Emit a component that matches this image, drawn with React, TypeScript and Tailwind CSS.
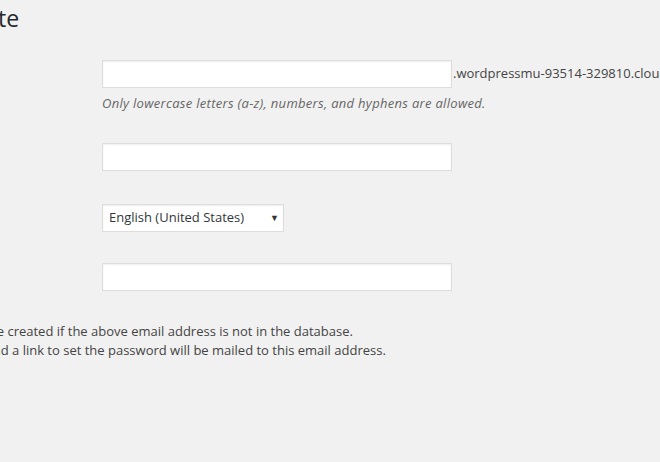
const field =
  "h-[28px] w-[350px] border border-[#dddddd] bg-white shadow-[inset_0_1px_2px_rgba(0,0,0,0.07)]";

export default function App() {
  return (
    <div className="h-[462px] w-[660px] overflow-hidden bg-[#f1f1f1] font-['Open_Sans',sans-serif] text-[13px] text-[#444444]">
      <div className="-ml-[108px] w-[900px]">
        <h1 className="-ml-[15px] pt-[4px] text-[23px] leading-[29px] font-normal text-[#23282d]">
          Add New Site
        </h1>

        <div className="flex flex-col pt-[27px] pl-[210px]">
          <div className="flex items-center">
            <input type="text" className={field} />
            <span className="ml-[1px] whitespace-nowrap">.wordpressmu-93514-329810.cloudwaysapps.com</span>
          </div>
          <p className="mt-[6px] italic tracking-[0.3px] text-[#666666]">
            Only lowercase letters (a-z), numbers, and hyphens are allowed.
          </p>

          <input type="text" className={`${field} mt-[29px]`} />

          <div className="mt-[33px] flex h-[28px] w-[182px] items-center justify-between border border-[#dddddd] bg-white pl-[6px] pr-[4px] shadow-[inset_0_1px_2px_rgba(0,0,0,0.07)]">
            <span className="text-[#32373c]">English (United States)</span>
            <span className="text-[9px] text-[#333333]">▼</span>
          </div>

          <input type="text" className={`${field} mt-[31px]`} />
        </div>

        <div className="pt-[31px] pl-[3px] leading-[19px]">
          <p>A new user will be created if the above email address is not in the database.</p>
          <p>The username and a link to set the password will be mailed to this email address.</p>
        </div>
      </div>
    </div>
  );
}
